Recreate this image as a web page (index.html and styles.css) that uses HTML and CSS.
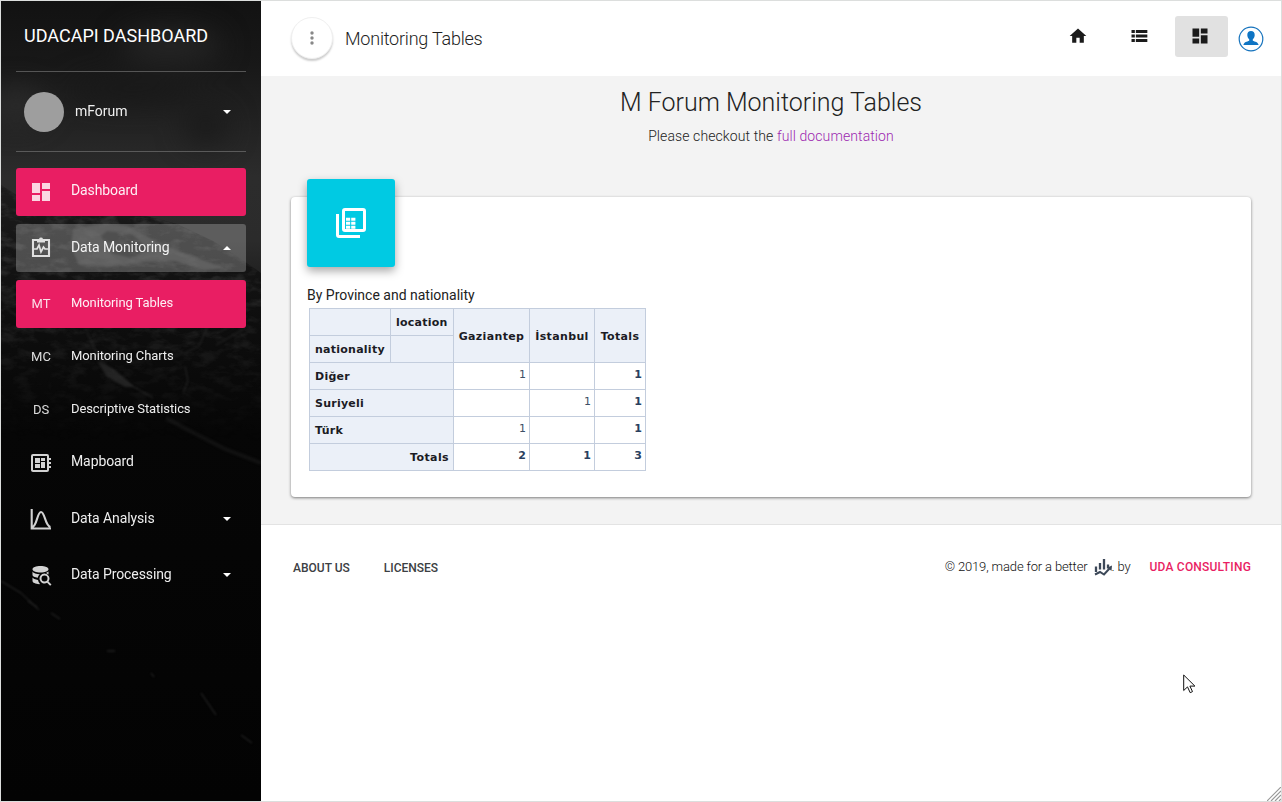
FILE: index.html
```html
<!DOCTYPE html>
<html lang="en">
<head>
<meta charset="utf-8">
<title>Monitoring Tables</title>
<link rel="stylesheet" href="styles.css">
</head>
<body>
<div class="frame">
  <aside class="sidebar">
    <svg class="backdrop" viewBox="0 0 260 800" preserveAspectRatio="none" aria-hidden="true">
      <defs>
        <linearGradient id="night" x1="0" y1="0" x2="0" y2="1">
          <stop offset="0" stop-color="#121212"/><stop offset=".08" stop-color="#181818"/>
          <stop offset=".13" stop-color="#1f1f1f"/><stop offset=".22" stop-color="#2c2c2c"/><stop offset=".3" stop-color="#2b2b2b"/>
          <stop offset=".4" stop-color="#141414"/><stop offset=".5" stop-color="#080808"/><stop offset="1" stop-color="#030303"/>
        </linearGradient>
        <linearGradient id="rock" gradientUnits="userSpaceOnUse" x1="0" y1="184" x2="0" y2="800">
          <stop offset="0" stop-color="#1c1c1c"/><stop offset=".2" stop-color="#0f0f0f"/><stop offset=".4" stop-color="#060606"/><stop offset="1" stop-color="#030303"/>
        </linearGradient>
        <linearGradient id="fade" gradientUnits="userSpaceOnUse" x1="0" y1="184" x2="0" y2="440">
          <stop offset="0" stop-color="#999"/><stop offset=".4" stop-color="#666"/><stop offset="1" stop-color="#000"/>
        </linearGradient>
        <mask id="ground"><path d="M0 184l22 14 40 8 48 5 28 2 38 10 36 17 28 18 20 14v238H0z" fill="url(#fade)"/></mask>
        <filter id="grain" x="0" y="0" width="100%" height="100%" color-interpolation-filters="sRGB">
          <feTurbulence type="fractalNoise" baseFrequency=".06 .12" numOctaves="4" seed="6"/>
          <feColorMatrix values="0 0 0 0 .25  0 0 0 0 .25  0 0 0 0 .25  3 0 0 0 -1.300"/>
        </filter>
        <filter id="haze" x="-60%" y="-100%" width="220%" height="300%" color-interpolation-filters="sRGB"><feGaussianBlur stdDeviation="14"/></filter>
        <filter id="soft" color-interpolation-filters="sRGB"><feGaussianBlur stdDeviation=".8"/></filter>
      </defs>
      <rect width="260" height="800" fill="url(#night)"/>
      <g filter="url(#haze)">
        <ellipse cx="170" cy="45" rx="50" ry="18" fill="#252525"/>
        <ellipse cx="130" cy="88" rx="60" ry="12" fill="#181818"/>
        <ellipse cx="205" cy="125" rx="22" ry="18" fill="#1a1a1a"/>
        <ellipse cx="15" cy="105" rx="30" ry="18" fill="#2b2b2b"/>
      </g>
      <path d="M0 184l22 14 40 8 48 5 28 2 38 10 36 17 28 18 20 14v528H0z" fill="url(#rock)"/>
      <g filter="url(#soft)">
        <path d="M72 228l32-6 22 3 38 20 32 12 28 10-20 2-30-9-34 1-32 5-30-2-8-18z" fill="#303030"/>
        <path d="M106 230l25 3 17 16-18 8-20-5-10-17z" fill="#171717"/>
        <path d="M96 360l17 8 21 18-10 0-18-10z" fill="#222"/>
        <g fill="none" stroke="#282828">
          <path d="M2 305l14 10M86 332l14 28 28 23 24 14M184 352l14-7 8-18 10-12M246 315l-27 16-18 3M184 365l3 15-5 12M215 344l26-15"/>
        </g>
        <path d="M165 417l24 13 35 18 36 14" fill="none" stroke="#121212" stroke-width="4"/>
        <g fill="none" stroke="#303030">
          <path d="M0 580l20 12 18 17M27 600l9 6M50 612l9 6M200 692l15 22M240 734l11 8"/>
          <path d="M106 650h8M150 672l3 4"/>
        </g>
      </g>
      <g mask="url(#ground)"><rect y="180" width="260" height="330" filter="url(#grain)"/></g>
    </svg>
    <div class="brand">UDACAPI DASHBOARD</div>
    <div class="user"><span class="avatar"></span><span class="user-name">mForum</span><i class="caret"></i></div>
    <nav class="menu">
      <a class="item active">
        <svg class="icon" viewBox="0 0 24 24"><path d="M3 13h8V3H3zm0 8h8v-6H3zm10 0h8V11h-8zm0-18v6h8V3z"/></svg>
        <span class="label up">Dashboard</span></a>
      <a class="item open">
        <svg class="icon line" viewBox="0 0 24 24"><path d="M4 4h16v16H4z"/><path d="M8 6.500V3h2a2.100 2.100 0 0 1 4 0h2v3.500z" class="solid"/><path d="M5 13h3l2-4 2 7 2.500-5 1.500 2h3" stroke-width="1.700"/></svg>
        <span class="label">Data Monitoring</span><i class="caret flip"></i></a>
      <a class="item active sub"><span class="mini">MT</span><span class="label">Monitoring Tables</span></a>
      <a class="item sub"><span class="mini">MC</span><span class="label">Monitoring Charts</span></a>
      <a class="item sub"><span class="mini">DS</span><span class="label">Descriptive Statistics</span></a>
      <a class="item tight">
        <svg class="icon" viewBox="0 0 24 24"><path d="M22 9V7h-2V5a2 2 0 0 0-2-2H4a2 2 0 0 0-2 2v14c0 1.100.9 2 2 2h14a2 2 0 0 0 2-2v-2h2v-2h-2v-2h2v-2h-2V9zm-4 10H4V5h14zM6 13h5v4H6zm6-6h4v3h-4zM6 7h5v5H6zm6 4h4v6h-4z"/></svg>
        <span class="label up">Mapboard</span></a>
      <a class="item">
        <svg class="icon line" viewBox="0 0 24 24"><path d="M2.700 2v19.500H22M3 20C8 20 8 5 12 5s4 14 9.500 15"/></svg>
        <span class="label">Data Analysis</span><i class="caret"></i></a>
      <a class="item">
        <svg class="icon" viewBox="0 0 24 24"><path d="M11.500 3C7 3 3.500 4.300 3.500 6.200S7 9.500 11.500 9.500s8-1.400 8-3.300S16 3 11.500 3zM3.500 8.500V12c0 1.300 2.200 2.300 5.300 2.700.3-1.500 1-2.700 2-3.500-3.500 0-6.300-1-7.300-2.700zM3.500 14.500V18c0 1.600 3 3 6.800 3.200l.7-.2a7 7 0 0 1-2-4c-2.800-.4-4.900-1.300-5.500-2.500z"/><path d="M15.500 10.500a5 5 0 1 0 2.600 9.300l3 3 1.400-1.400-3-3a5 5 0 0 0-4-7.900zm0 2a3 3 0 1 1 0 6 3 3 0 0 1 0-6zM17 10l2.500-1.500v3z"/></svg>
        <span class="label">Data Processing</span><i class="caret"></i></a>
    </nav>
  </aside>
  <main class="main">
    <header class="topbar">
      <button class="round"><svg viewBox="0 0 18 18"><g fill="#888"><circle cx="9" cy="4" r="1.700"/><circle cx="9" cy="9" r="1.700"/><circle cx="9" cy="14" r="1.700"/></g></svg></button>
      <span class="page-name">Monitoring Tables</span>
      <div class="tools">
        <a class="tool"><svg viewBox="0 0 24 24"><path d="M10 20v-6h4v6h5v-8h3L12 3 2 12h3v8z"/></svg></a>
        <a class="tool"><svg viewBox="0 0 24 24"><path d="M3 8.400h4V4.800H3zm0 5.400h4v-3.600H3zm0 5.400h4v-3.600H3zm5.200-5.400H22v-3.600H8.200zm0 5.400H22v-3.600H8.200zm0-14.400v3.600H22V4.800z"/></svg></a>
        <a class="tool on"><svg viewBox="0 0 24 24"><path d="M3 13h8V3H3zm0 8h8v-6H3zm10 0h8V11h-8zm0-18v6h8V3z"/></svg></a>
        <svg class="person" viewBox="0 0 26 26"><circle cx="13" cy="13" r="11.800" fill="#fff" stroke="#1673bd" stroke-width="1.200"/><path d="M13 5c2.400 0 3.700 1.600 3.700 4 0 1.900-.8 3.500-1.900 4.300v1.500c2.200 1 5.200 1.200 5.800 4.200H5.400c.6-3 3.600-3.200 5.800-4.200v-1.500C10.100 12.500 9.300 10.900 9.300 9c0-2.400 1.300-4 3.700-4z" fill="#0f75c4"/></svg>
      </div>
    </header>
    <section class="content">
      <h1 class="title">M Forum Monitoring Tables</h1>
      <p class="intro">Please checkout the <a class="doc">full documentation</a></p>
      <div class="card">
        <div class="card-icon"><svg viewBox="0 0 36 36" fill="none" stroke="#fff" stroke-width="3"><rect x="10.500" y="4.500" width="21" height="21" rx="1.500"/><path d="M4.500 9v21a1.500 1.500 0 0 0 1.500 1.500h21"/><path d="M13 14.300h4.200M18.200 14.300h4.200M13 18.200h4.200M18.200 18.200h4.200M13 22.200h4.200M18.200 22.200h4.200" stroke-width="3"/></svg></div>
        <div class="caption">By Province and nationality</div>
        <table class="pivot">
          <colgroup><col class="c1"><col class="c2"><col class="c3"><col class="c4"><col class="c5"></colgroup>
          <tr><th></th><th>location</th><th rowspan="2" class="mid">Gaziantep</th><th rowspan="2" class="mid">İstanbul</th><th rowspan="2" class="mid">Totals</th></tr>
          <tr><th>nationality</th><th></th></tr>
          <tr><th colspan="2">Diğer</th><td>1</td><td></td><td class="total">1</td></tr>
          <tr><th colspan="2">Suriyeli</th><td></td><td>1</td><td class="total">1</td></tr>
          <tr><th colspan="2">Türk</th><td>1</td><td></td><td class="total">1</td></tr>
          <tr><th colspan="2" class="right">Totals</th><td class="total">2</td><td class="total">1</td><td class="total">3</td></tr>
        </table>
      </div>
    </section>
    <footer class="footer">
      <a class="foot-link about">ABOUT US</a><a class="foot-link">LICENSES</a>
      <div class="copy"><span class="made">© 2019, made for a better</span>
        <svg class="chart" viewBox="0 0 18 17"><g stroke="#3c4858" fill="none"><path d="M2 7.500v5.500M6 4v6.500M10 0v10.500M14 5.500v4" stroke-width="2.300"/><path d="M1 15.500l5-2.500 4 2.500 5.500-6" stroke-width="2"/></g><path d="M18 6.500l-.5 5.500-4-3.500z" fill="#3c4858"/></svg>
        <span class="by">. by</span><a class="uda">UDA CONSULTING</a></div>
    </footer>
  </main>
  <svg class="pointer" viewBox="0 0 13 20"><path d="M.7 1v15.500l3.800-3.600 2.700 5.800 2.300-1.100-2.600-5.500h5z" fill="#fff" stroke="#111"/></svg>
  <svg class="grip" viewBox="0 0 14 14"><path d="M0 14L14 0M4 14L14 4M8 14l6-6M12 14l2-2" stroke="#999" stroke-width="1.200"/></svg>
</div>
</body>
</html>
```
FILE: styles.css
```css
* { box-sizing: border-box; }
body { margin: 0; font-family: Roboto, sans-serif; font-weight: 300; font-size: 14px; color: #222; }
.frame { position: relative; display: flex; width: 1282px; height: 802px; border: 1px solid #dcdedd; background: #fff; overflow: hidden; }
svg { display: block; flex: none; }

.sidebar { position: relative; width: 260px; height: 800px; flex: none; padding: 0 15px; color: #fff; background: #050505; }
.backdrop { position: absolute; left: 0; top: 0; width: 260px; height: 800px; }
.brand, .user, .menu { position: relative; }
.brand { height: 71px; padding-left: 8px; line-height: 69px; font-size: 18px; font-weight: 400; border-bottom: 1px solid #555; }
.user { display: flex; align-items: center; height: 80px; padding: 0 15px 0 8px; border-bottom: 1px solid #5a5a5a; }
.avatar { width: 40px; height: 40px; border-radius: 50%; background: #9e9e9e; margin-right: 11px; }
.user-name { font-size: 14px; font-weight: 400; flex: 1; padding-bottom: 2px; opacity: .93; }
.caret { width: 0; height: 0; border: 4.5px solid transparent; border-top: 4px solid #fff; border-bottom: 0; }
.flip { transform: rotate(180deg); }
.menu { padding-top: 16px; }
.item { display: flex; align-items: center; height: 48px; margin-bottom: 8px; padding: 0 15px 0 13px; border-radius: 3px; }
.item.active { background: #e91e63; }
.item.open { background: rgba(200, 200, 200, .32); }
.item.sub { margin-bottom: 5px; }
.icon { width: 24px; height: 24px; margin-right: 18px; fill: #fff; opacity: .82; }
.line { fill: none; stroke: #fff; stroke-width: 2.100; }
.solid { fill: #fff; stroke: none; }
.mini { width: 24px; margin-right: 18px; padding-bottom: 1px; text-align: center; font-size: 13px; font-weight: 400; opacity: .85; }
.label { flex: 1; font-size: 14px; font-weight: 400; letter-spacing: -.1px; opacity: .93; padding-bottom: 2px; }
.label.up { padding-bottom: 4px; }
.sub .label { font-size: 13px; padding-bottom: 4px; }

.main { width: 1020px; flex: none; }
.topbar { display: flex; align-items: center; height: 75px; padding: 0 17px 0 30px; }
.round { width: 42px; height: 42px; margin-bottom: 2px; padding: 0; display: grid; place-items: center; border: 1px solid #f0f0f0; border-radius: 50%; background: #fff; box-shadow: 0 2px 2px rgba(0, 0, 0, .2); }
.round svg { width: 18px; height: 18px; }
.page-name { margin-left: 12px; font-size: 18px; letter-spacing: -.22px; }
.tools { display: flex; align-items: center; margin-left: auto; }
.tool { display: grid; place-items: center; width: 53px; height: 41px; margin: 0 8px 4px 0; padding: 0 4px 1px 0; border-radius: 3px; }
.tool.on { background: #e1e1e1; margin-right: 10px; }
.tool svg { width: 20px; height: 20px; fill: #1b1b1b; }
.person { width: 26px; height: 26px; }
.content { height: 448px; padding: 10px 30px 0; background: #f3f3f3; }
.title { margin: 0; text-align: center; font-size: 25px; line-height: 34px; font-weight: 300; }
.intro { margin: 6px 0 0; text-align: center; line-height: 20px; letter-spacing: .1px; }
.doc { color: #9c27b0; }
.card { height: 300px; margin-top: 51px; padding: 0 16px; background: #fff; border-radius: 4px; box-shadow: 0 1px 3px rgba(0, 0, 0, .5); }
.card-icon { position: relative; top: -18px; display: grid; place-items: center; width: 88px; height: 88px; border-radius: 3px; background: #00cae3; box-shadow: 0 4px 10px rgba(0, 0, 0, .35); }
.card-icon svg { width: 36px; height: 36px; }
.caption { height: 23px; line-height: 20px; font-weight: 400; }
.pivot { table-layout: fixed; width: 337px; margin-left: 2px; border-collapse: collapse; font-family: Verdana, "DejaVu Sans", sans-serif; font-size: 11px; line-height: 14px; }
.c1 { width: 81px; } .c2 { width: 63px; } .c3 { width: 76px; } .c4 { width: 65px; } .c5 { width: 51px; }
.pivot th, .pivot td { height: 27px; border: 1px solid #c3cddd; white-space: nowrap; }
.pivot th { padding: 1px 0 0 5px; background: #ebf0f8; text-align: left; font-weight: 700; letter-spacing: .25px; color: #1b1b24; }
.pivot .mid { text-align: center; padding: 2px 0 0; letter-spacing: .35px; }
.pivot .right { text-align: right; padding-right: 4px; letter-spacing: .4px; }
.pivot td { text-align: right; padding: 0 3px 3px; font-weight: 400; color: #3d4f66; }
.pivot .total { font-weight: 700; color: #2a3f5f; }
.footer { display: flex; align-items: center; height: 85px; padding: 0 30px 0 32px; border-top: 1px solid #e3e3e3; }
.foot-link { padding-top: 1px; font-size: 12px; font-weight: 500; color: #3c4043; }
.about { margin-right: 34px; }
.copy { display: flex; align-items: center; margin-left: auto; font-size: 13px; font-weight: 300; }
.made, .by { padding-bottom: 1px; letter-spacing: -.14px; color: #111; }
.chart { width: 18px; height: 17px; margin: 0 0 0 6px; }
.uda { margin-left: 19px; font-size: 12px; font-weight: 500; letter-spacing: .2px; color: #e91e63; }
.pointer { position: absolute; left: 1182px; top: 673px; width: 13px; height: 20px; }
.grip { position: absolute; right: 0; bottom: 0; width: 14px; height: 14px; }
```
